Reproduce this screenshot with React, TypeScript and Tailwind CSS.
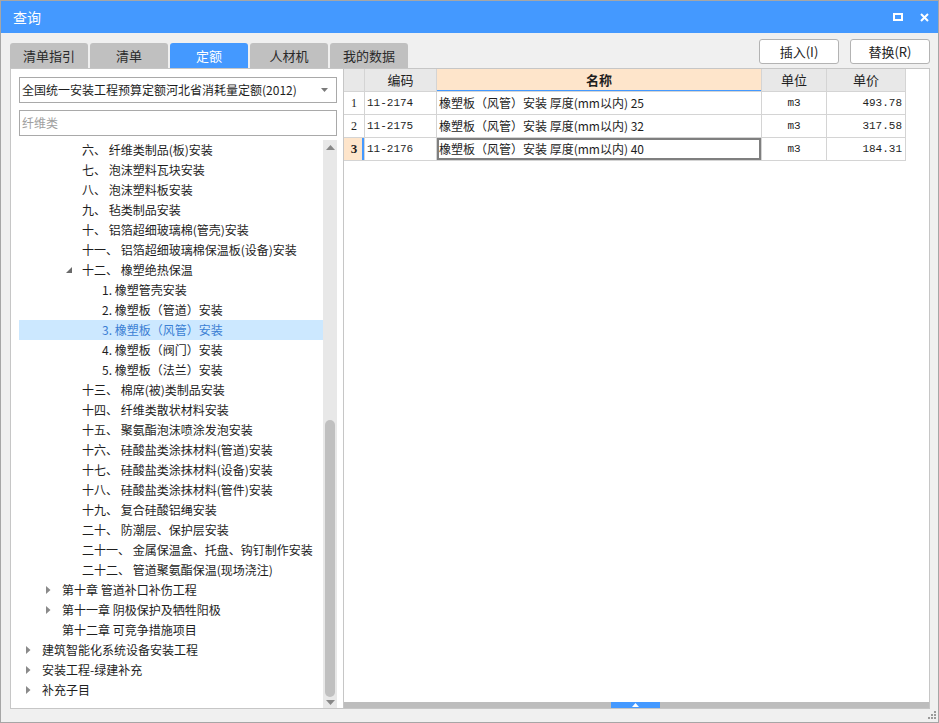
type Node = { l: number; t: string; a?: "open" | "closed"; sel?: boolean };

const tree: Node[] = [
  { l: 2, t: "六、 纤维类制品(板)安装" },
  { l: 2, t: "七、 泡沫塑料瓦块安装" },
  { l: 2, t: "八、 泡沫塑料板安装" },
  { l: 2, t: "九、 毡类制品安装" },
  { l: 2, t: "十、 铝箔超细玻璃棉(管壳)安装" },
  { l: 2, t: "十一、 铝箔超细玻璃棉保温板(设备)安装" },
  { l: 2, t: "十二、 橡塑绝热保温", a: "open" },
  { l: 3, t: "1. 橡塑管壳安装" },
  { l: 3, t: "2. 橡塑板（管道）安装" },
  { l: 3, t: "3. 橡塑板（风管）安装", sel: true },
  { l: 3, t: "4. 橡塑板（阀门）安装" },
  { l: 3, t: "5. 橡塑板（法兰）安装" },
  { l: 2, t: "十三、 棉席(被)类制品安装" },
  { l: 2, t: "十四、 纤维类散状材料安装" },
  { l: 2, t: "十五、 聚氨酯泡沫喷涂发泡安装" },
  { l: 2, t: "十六、 硅酸盐类涂抹材料(管道)安装" },
  { l: 2, t: "十七、 硅酸盐类涂抹材料(设备)安装" },
  { l: 2, t: "十八、 硅酸盐类涂抹材料(管件)安装" },
  { l: 2, t: "十九、 复合硅酸铝绳安装" },
  { l: 2, t: "二十、 防潮层、保护层安装" },
  { l: 2, t: "二十一、 金属保温盒、托盘、钩钉制作安装" },
  { l: 2, t: "二十二、 管道聚氨酯保温(现场浇注)" },
  { l: 1, t: "第十章 管道补口补伤工程", a: "closed" },
  { l: 1, t: "第十一章 阴极保护及牺牲阳极", a: "closed" },
  { l: 1, t: "第十二章 可竞争措施项目" },
  { l: 0, t: "建筑智能化系统设备安装工程", a: "closed" },
  { l: 0, t: "安装工程-绿建补充", a: "closed" },
  { l: 0, t: "补充子目", a: "closed" },
];

const indent = ["pl-[7px]", "pl-[27px]", "pl-[47px]", "pl-[67px]"];

const tabs = ["清单指引", "清单", "定额", "人材机", "我的数据"];

const rows = [
  { no: "1", code: "11-2174", name: "橡塑板（风管）安装 厚度(mm以内) 25", unit: "m3", price: "493.78" },
  { no: "2", code: "11-2175", name: "橡塑板（风管）安装 厚度(mm以内) 32", unit: "m3", price: "317.58" },
  { no: "3", code: "11-2176", name: "橡塑板（风管）安装 厚度(mm以内) 40", unit: "m3", price: "184.31" },
];

const mono = "font-['Liberation_Mono','Noto_Sans_CJK_SC',monospace]";

const Arrow = ({ a }: { a?: "open" | "closed" }) => (
  <div className="w-[16px] h-full flex items-center">
    {a === "closed" && (
      <svg width="5" height="8" viewBox="0 0 5 8">
        <path d="M0 0 L4.5 4 L0 8 Z" fill="#8a8a8a" />
      </svg>
    )}
    {a === "open" && (
      <svg width="6" height="6" viewBox="0 0 6 6">
        <path d="M6 0 L6 6 L0 6 Z" fill="#6a6a6a" />
      </svg>
    )}
  </div>
);

export default function App() {
  return (
    <div className="relative w-[939px] h-[723px] bg-[#f0f0f0] border border-[#a6a6a6] flex flex-col font-['Noto_Sans_CJK_SC',sans-serif] text-[#1e1e1e] overflow-hidden">
      {/* title bar */}
      <div className="h-[32px] bg-[#4499ff] flex items-center justify-between pl-[12px] pr-[9px] text-white">
        <span className="text-[14px]">查询</span>
        <div className="flex items-center gap-[17px]">
          <svg width="10" height="8" viewBox="0 0 10 8">
            <rect x="1" y="1" width="8" height="6" fill="none" stroke="white" strokeWidth="2" />
          </svg>
          <svg width="9" height="9" viewBox="0 0 9 9">
            <path d="M1 1 L8 8 M8 1 L1 8" stroke="white" strokeWidth="2" />
          </svg>
        </div>
      </div>

      <div className="flex-1 flex flex-col pl-[9px] pr-[8px]">
        {/* tabs + buttons */}
        <div className="h-[35px] flex justify-between">
          <div className="flex gap-[2px] self-end">
            {tabs.map((t, i) => (
              <div
                key={t}
                className={
                  i === 2
                    ? "w-[78px] h-[25px] rounded-t-[3px] bg-[#4499ff] text-white text-[13px] flex items-center justify-center"
                    : "w-[78px] h-[25px] rounded-t-[3px] bg-[#c0c0c0] text-[#2a2a2a] text-[13px] flex items-center justify-center"
                }
              >
                {t}
              </div>
            ))}
          </div>
          <div className="flex gap-[11px] pt-[6px]">
            <button className="w-[80px] h-[25px] bg-white border border-[#b3b3b3] rounded-[3px] text-[13px] text-[#222]">
              插入(I)
            </button>
            <button className="w-[80px] h-[25px] bg-white border border-[#b3b3b3] rounded-[3px] text-[13px] text-[#222]">
              替换(R)
            </button>
          </div>
        </div>

        {/* panels */}
        <div className="flex h-[641px]">
          {/* left */}
          <div className="w-[334px] bg-white border border-[#c6c6c6] flex flex-col pt-[8px] pl-[8px] pr-[5px]">
            <div className="w-[318px] h-[26px] border border-[#a9a9a9] flex items-center justify-between pl-[2px] pr-[8px] text-[12px]">
              <span>全国统一安装工程预算定额河北省消耗量定额(2012)</span>
              <svg width="7" height="4" viewBox="0 0 7 4">
                <path d="M0 0 L7 0 L3.5 4 Z" fill="#7a7a7a" />
              </svg>
            </div>
            <div className="w-[318px] h-[26px] mt-[7px] border border-[#a9a9a9] flex items-center pl-[2px] text-[12px] text-[#a0a0a0]">
              纤维类
            </div>
            <div className="flex mt-[4px] h-[568px]">
              <div className="w-[304px] flex flex-col">
                {tree.map((n, i) => (
                  <div
                    key={i}
                    className={
                      (n.sel ? "bg-[#cce8ff] text-[#3b7fd4] " : "") +
                      "h-[20px] flex items-center text-[12px] whitespace-pre " +
                      indent[n.l]
                    }
                  >
                    <Arrow a={n.a} />
                    <span>{n.t}</span>
                  </div>
                ))}
              </div>
              <div className="w-[14px] bg-[#e8e8e8] flex flex-col items-center">
                <div className="h-[14px] flex items-center justify-center">
                  <svg width="9" height="5" viewBox="0 0 9 5">
                    <path d="M0 5 L4.5 0 L9 5 Z" fill="#888" />
                  </svg>
                </div>
                <div className="h-[266px]" />
                <div className="w-[10px] h-[277px] rounded-full bg-[#c0c0c0]" />
                <div className="h-[11px] flex items-center justify-center">
                  <svg width="9" height="5" viewBox="0 0 9 5">
                    <path d="M0 0 L9 0 L4.5 5 Z" fill="#888" />
                  </svg>
                </div>
              </div>
            </div>
          </div>

          {/* right */}
          <div className="w-[586px] bg-white border border-l-0 border-[#c6c6c6] flex flex-col">
            <div className="flex flex-col w-[562px] text-[12px]">
              <div className="flex h-[23px] border-b border-[#d4d4d4]">
                <div className="w-[21px] bg-[#e8e8e8] border-r border-[#d4d4d4]" />
                <div className="w-[72px] bg-[#e8e8e8] border-r border-[#d4d4d4] flex items-center justify-center text-[13px]">
                  编码
                </div>
                <div className="w-[325px] bg-[#fee5cb] border-r border-[#d4d4d4] shadow-[inset_0_-1px_0_#4499ff] flex items-center justify-center text-[13px] font-bold">
                  名称
                </div>
                <div className="w-[65px] bg-[#e8e8e8] border-r border-[#d4d4d4] flex items-center justify-center text-[13px]">
                  单位
                </div>
                <div className="w-[79px] bg-[#e8e8e8] border-r border-[#d4d4d4] flex items-center justify-center text-[13px]">
                  单价
                </div>
              </div>
              {rows.map((r, i) => {
                const last = i === rows.length - 1;
                return (
                  <div key={r.no} className="flex h-[23px] border-b border-[#d4d4d4]">
                    <div
                      className={
                        last
                          ? "w-[21px] bg-[#fee5cb] border-r border-[#d4d4d4] shadow-[inset_-2px_0_0_#4499ff] flex items-center justify-center text-[13px] font-bold font-['Liberation_Serif',serif]"
                          : "w-[21px] border-r border-[#d4d4d4] flex items-center justify-center text-[12px] font-['Liberation_Serif',serif]"
                      }
                    >
                      {r.no}
                    </div>
                    <div className={"w-[72px] border-r border-[#d4d4d4] flex items-center pl-[2px] text-[11px] " + mono}>
                      {r.code}
                    </div>
                    <div
                      className={
                        (last ? "shadow-[inset_0_0_0_2px_#7f7f7f] " : "") +
                        "w-[325px] border-r border-[#d4d4d4] flex items-center pl-[2px] whitespace-pre"
                      }
                    >
                      {r.name}
                    </div>
                    <div className={"w-[65px] border-r border-[#d4d4d4] flex items-center justify-center text-[11px] " + mono}>
                      {r.unit}
                    </div>
                    <div className={"w-[79px] border-r border-[#d4d4d4] flex items-center justify-end pr-[3px] text-[11px] " + mono}>
                      {r.price}
                    </div>
                  </div>
                );
              })}
            </div>
            <div className="flex-1" />
            <div className="h-[6px] bg-[#bdbdbd] flex">
              <div className="w-[267px]" />
              <div className="w-[49px] bg-[#4499ff] flex items-center justify-center">
                <svg width="7" height="4" viewBox="0 0 7 4">
                  <path d="M0 4 L3.5 0 L7 4 Z" fill="white" />
                </svg>
              </div>
            </div>
          </div>
        </div>
      </div>

      {/* resize grip */}
      <div className="absolute right-[2px] bottom-[3px] grid grid-cols-3 gap-[1px]">
        <div className="w-[2px] h-[2px]" />
        <div className="w-[2px] h-[2px]" />
        <div className="w-[2px] h-[2px] bg-[#9a9a9a]" />
        <div className="w-[2px] h-[2px]" />
        <div className="w-[2px] h-[2px] bg-[#9a9a9a]" />
        <div className="w-[2px] h-[2px] bg-[#9a9a9a]" />
        <div className="w-[2px] h-[2px] bg-[#9a9a9a]" />
        <div className="w-[2px] h-[2px] bg-[#9a9a9a]" />
        <div className="w-[2px] h-[2px] bg-[#9a9a9a]" />
      </div>
    </div>
  );
}
